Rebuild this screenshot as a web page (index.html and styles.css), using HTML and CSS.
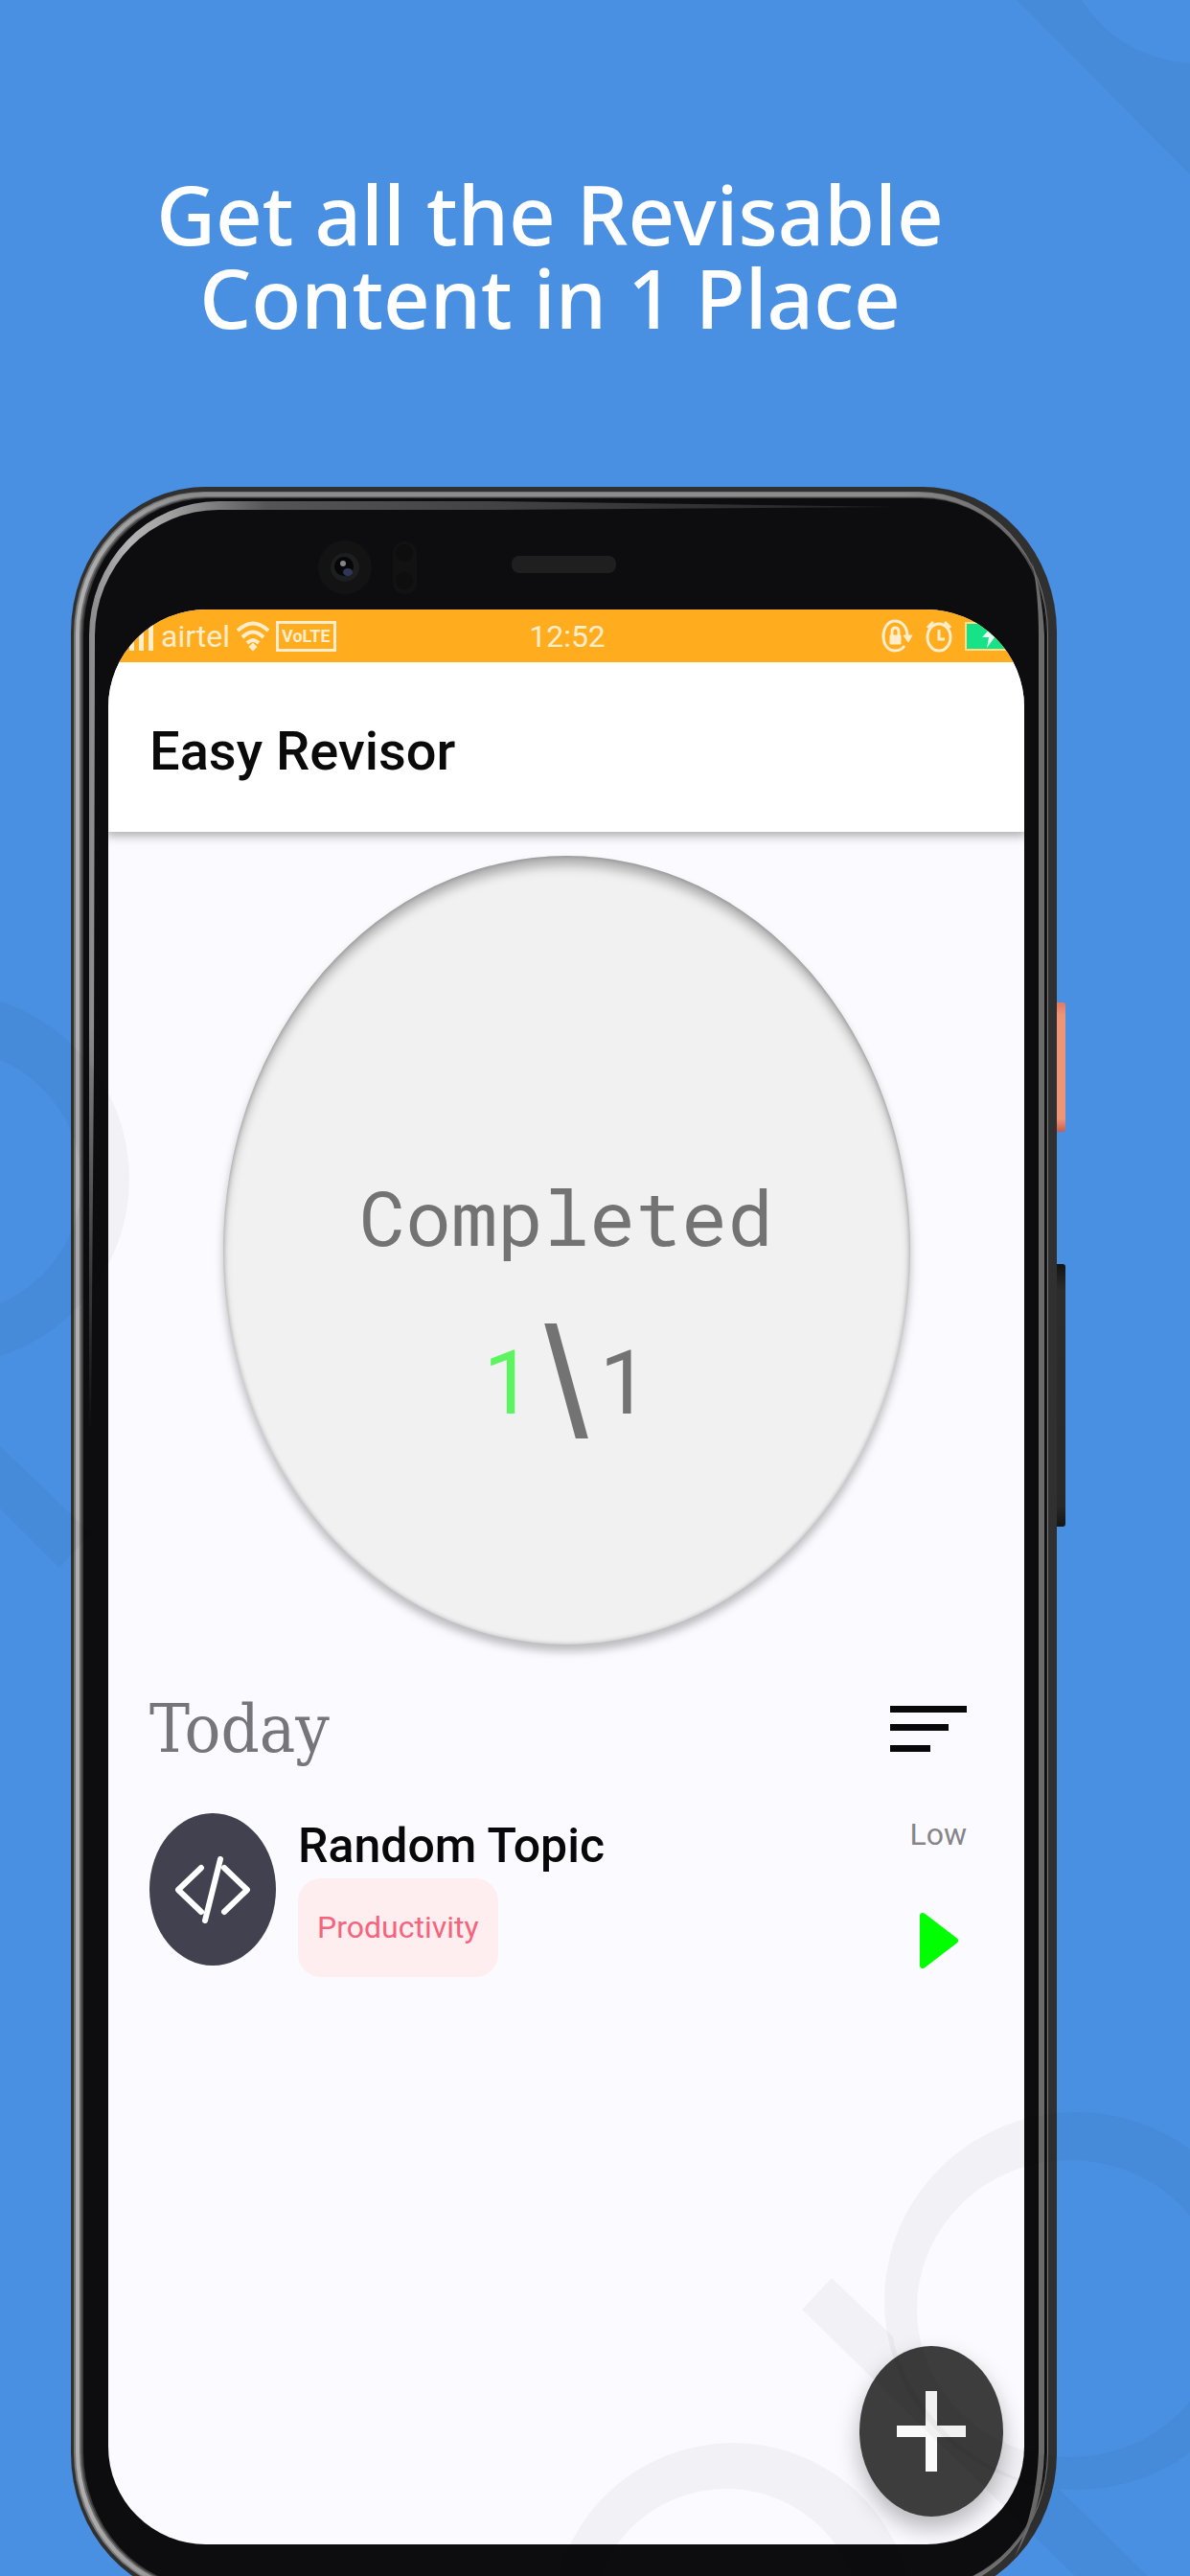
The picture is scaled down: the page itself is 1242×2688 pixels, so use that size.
FILE: index.html
```html
<!DOCTYPE html>
<html lang="en">
<head>
<meta charset="utf-8">
<meta name="viewport" content="width=device-width, initial-scale=1">
<title>Easy Revisor</title>
<link rel="stylesheet" href="styles.css">
</head>
<body>
<div class="page">
  <header class="promo">
    <h1 class="promo-title">Get all the Revisable<br>Content in 1 Place</h1>
  </header>

  <div class="phone">
    <svg class="bezel" viewBox="0 0 1029 2204" preserveAspectRatio="none" aria-hidden="true">
      <defs>
        <linearGradient id="rim" x1="0" x2="1" y1="0" y2="0">
          <stop offset="0" stop-color="#b0b0b0"/><stop offset=".12" stop-color="#8c8c8c"/>
          <stop offset=".85" stop-color="#8c8c8c"/><stop offset=".97" stop-color="#666"/><stop offset="1" stop-color="#1a1a1c"/>
        </linearGradient>
        <linearGradient id="gloss" x1="0" x2="1" y1="0" y2="0">
          <stop offset="0" stop-color="#8a8a8a"/><stop offset=".05" stop-color="#b4b4b4"/>
          <stop offset=".1" stop-color="#a0a0a0"/><stop offset=".22" stop-color="#555"/><stop offset="1" stop-color="#222"/>
        </linearGradient>
        <linearGradient id="gloss-fade" x1="0" x2="0" y1="0" y2="1">
          <stop offset="0" stop-color="#0d0d0f" stop-opacity="0"/><stop offset="1" stop-color="#0d0d0f"/>
        </linearGradient>
        <linearGradient id="power" x1="0" x2="0" y1="0" y2="1">
          <stop offset="0" stop-color="#e27a63"/><stop offset=".1" stop-color="#f09478"/>
          <stop offset=".9" stop-color="#f09478"/><stop offset="1" stop-color="#c75e50"/>
        </linearGradient>
        <linearGradient id="volume" x1="0" x2="0" y1="0" y2="1">
          <stop offset="0" stop-color="#141414"/><stop offset=".1" stop-color="#2c2c2c"/>
          <stop offset=".92" stop-color="#282828"/><stop offset="1" stop-color="#151515"/>
        </linearGradient>
      </defs>
      <rect x="1024" y="538" width="14" height="135" rx="3" fill="url(#power)"/>
      <rect x="1024" y="811" width="14" height="274" rx="3" fill="url(#volume)"/>
      <rect width="1029" height="2204" rx="140" ry="152" fill="#303030"/>
      <rect x="3" y="5" width="1017" height="2194" rx="136" ry="148" fill="#777"/>
      <rect x="5" y="6" width="1014" height="2192" rx="135" ry="147" fill="url(#rim)"/>
      <rect x="9" y="10" width="1009" height="2184" rx="132" ry="144" fill="#6a6a6a"/>
      <rect x="11" y="11" width="1007" height="2182" rx="131" ry="143" fill="#3c3c3c"/>
      <rect x="13" y="12" width="1005" height="2180" rx="130" ry="142" fill="#0d0d0f"/>
      <path d="M19 985V155A135 140 0 0 1 154 15L440 15L861 21L440 24H154A129 131 0 0 0 25 155L24 600L21 985Z" fill="url(#gloss)"/>
      <rect x="17" y="560" width="10" height="426" fill="url(#gloss-fade)"/>
      <path d="M1003 78Q1010 110 1010 155V2050Q1008 2110 985 2160Q1015 2110 1016 2050V155Q1014 110 1003 78Z" fill="#6b6b6b"/>
      <ellipse cx="286" cy="84" rx="28" ry="28" fill="#131314"/>
      <circle cx="286" cy="84" r="15" fill="#1d1e22"/>
      <circle cx="285" cy="83" r="10" fill="#07070a"/>
      <ellipse cx="289" cy="89" rx="5" ry="4" fill="#2f3757"/>
      <circle cx="284" cy="80" r="3" fill="#858585"/>
      <rect x="336" y="57" width="25" height="55" rx="12" fill="#121213"/>
      <circle cx="348" cy="69" r="9" fill="#0e0e0f"/><circle cx="348" cy="98" r="9" fill="#0e0e0f"/>
      <rect x="460" y="72" width="109" height="18" rx="8" fill="#1f1f20"/>
    </svg>

    <main class="screen">
      <div class="status">
        <div class="status-left">
          <svg width="26" height="30" viewBox="0 0 26 30" fill="#ffedcb" aria-hidden="true"><path d="M0 12h5v18H0zM10 4h5v26h-5zM20 0h5v30h-5z"/></svg>
          <span>airtel</span>
          <svg width="34" height="32" viewBox="0 0 34 32" fill="none" stroke="#ffedcb" stroke-width="4" aria-hidden="true"><path d="M1 10Q17-5 33 10M6 17Q17 6 28 17M11 23Q17 17 23 23"/><path d="M14 27L17 24L20 27L17 30Z" fill="#ffedcb" stroke-width="2"/></svg>
          <span class="volte">VoLTE</span>
        </div>
        <time class="clock">12:52</time>
        <div class="status-right">
          <svg width="33" height="36" viewBox="0 0 33 36" fill="none" stroke="#ffedcb" stroke-width="3" aria-hidden="true"><path d="M27 18C27 8 21 2 14 2S2 9 2 18s5 15 12 15c5 0 8-2 10-5"/><path d="M23 17h9l-4 7z" fill="#ffedcb" stroke-width="1"/><path d="M9 17h11v9H9z" fill="#ffedcb" stroke-width="1"/><path d="M11 17v-4q0-4 3.500-4t3.500 4v4"/></svg>
          <svg width="28" height="36" viewBox="0 0 28 36" fill="none" stroke="#ffedcb" stroke-width="3" aria-hidden="true"><ellipse cx="14" cy="19" rx="12" ry="14"/><path d="M14 11v10h6M2 9l6-6M26 9l-6-6" /></svg>
          <svg width="62" height="32" viewBox="0 0 62 32" aria-hidden="true"><path d="M1 2h60v28H1z" fill="#16e388" stroke="#ffe08a" stroke-width="2"/><path d="M30 4L18 17h7l-2 11 11-15h-7z" fill="#e8fff3"/></svg>
        </div>
      </div>

      <div class="appbar"><h2 class="app-name">Easy Revisor</h2></div>

      <section class="progress">
        <p class="progress-label">Completed</p>
        <p class="progress-count"><span class="done">1</span><span class="slash">\</span><span>1</span></p>
      </section>

      <section class="today">
        <div class="today-head">
          <h2 class="today-title">Today</h2>
          <button class="icon-button" type="button" aria-label="Sort">
            <svg width="80" height="50" viewBox="0 0 80 50" fill="#08080a" aria-hidden="true"><path d="M0 1h80v7H0zM0 20h61v7H0zM0 42h42v7H0z"/></svg>
          </button>
        </div>
        <article class="topic">
          <div class="avatar">
            <svg width="78" height="70" viewBox="0 0 78 70" fill="none" stroke="#fff" stroke-width="6" stroke-linecap="round" stroke-linejoin="round" aria-hidden="true"><path d="M27 12L3 35L27 58M51 12L75 35L51 58M47 3L31 67"/></svg>
          </div>
          <div class="topic-body">
            <h3 class="topic-title">Random Topic</h3>
            <span class="tag">Productivity</span>
          </div>
          <div class="topic-side">
            <span class="priority">Low</span>
            <button class="icon-button play" type="button" aria-label="Start">
              <svg width="42" height="58" viewBox="0 0 42 58" aria-hidden="true"><path d="M4 3L38 29L4 55Z" fill="#0f0" stroke="#0f0" stroke-width="6" stroke-linejoin="round"/></svg>
            </button>
          </div>
        </article>
      </section>

      <button class="fab" type="button" aria-label="Add topic">
        <svg width="72" height="84" viewBox="0 0 72 84" fill="#fafafa" aria-hidden="true"><path d="M30 0h12v36h30v12H42v36H30V48H0V36h30z"/></svg>
      </button>
    </main>
  </div>

  <svg class="watermark" viewBox="0 0 1242 2688" preserveAspectRatio="none" aria-hidden="true">
    <path d="M1061 0H1129Q1168 60 1242 66V182Z"/>
    <path fill-rule="evenodd" d="M-259 1230a197 195 0 1 0 394 0a197 195 0 1 0-394 0ZM-207 1233a146 140 0 1 1 292 0a146 140 0 1 1-292 0Z"/>
    <path d="M0 1509L95 1600L62 1636L0 1574Z"/>
    <path fill-rule="evenodd" d="M923 2401a200 197 0 1 0 400 0a200 197 0 1 0-400 0ZM957 2409a160 155 0 1 1 320 0a160 155 0 1 1-320 0Z"/>
    <path d="M868 2377L932 2438Q937 2470 960 2504Q1010 2580 1105 2597L1198 2688H1122L837 2410Z"/>
    <path fill-rule="evenodd" d="M576 2738a189 189 0 1 0 378 0a189 189 0 1 0-378 0ZM617 2738a141 141 0 1 1 282 0a141 141 0 1 1-282 0Z"/>
  </svg>
</div>
</body>
</html>
```
FILE: styles.css
```css
* { box-sizing: border-box; }

body {
  margin: 0;
  background: #4990e2;
  font-family: Roboto, "Liberation Sans", sans-serif;
}

h1, h2, h3, p { margin: 0; }

button {
  border: 0;
  padding: 0;
  background: none;
  cursor: pointer;
}

svg { display: block; flex: none; }

.page {
  position: relative;
  display: flex;
  flex-direction: column;
  min-height: 100vh;
  overflow: hidden;
}

/* Headline above the phone */
.promo {
  height: 508px;
  padding: 180px 94px 0 0;
  text-align: center;
}

.promo-title {
  color: #fff;
  font-family: "Noto Sans", sans-serif;
  font-size: 85px;
  font-weight: 500;
  line-height: 87px;
}

/* Phone body; its lower edge runs off the page */
.phone {
  position: relative;
  flex: 1;
  display: flex;
  margin: 0 139px -24px 74px;
  padding: 128px 34px 57px 39px;
}

.bezel {
  position: absolute;
  inset: 0;
  width: 100%;
  height: 100%;
  overflow: visible;
}

.screen {
  position: relative;
  flex: 1;
  overflow: hidden;
  border-radius: 102px;
  background: #fbfbff;
}

.status {
  position: relative;
  z-index: 1;
  display: grid;
  grid-template-columns: 1fr auto 1fr;
  align-items: center;
  height: 55px;
  padding-left: 22px;
  background: #ffac1f;
  color: #ffedcb;
  font-size: 32px;
}

.status-left { display: flex; align-items: center; gap: 7px; }

.clock { margin-right: 20px; }

.status-right {
  display: flex;
  align-items: center;
  justify-content: flex-end;
  gap: 13px;
}

.volte {
  padding: 0 3px;
  border: 3px solid #ffedcb;
  font-size: 18px;
  font-weight: 700;
  line-height: 26px;
}

.appbar {
  position: relative;
  display: flex;
  align-items: center;
  height: 177px;
  padding: 8px 43px 0;
  background: #fff;
  box-shadow: 0 2px 10px 2px rgba(0, 0, 0, .32);
}

.app-name { color: #0a0a0a; font-size: 56px; font-weight: 500; }

.progress {
  display: flex;
  flex-direction: column;
  align-items: center;
  width: 75%;
  aspect-ratio: 717 / 823;
  margin: 25px auto 0;
  padding-top: 316px;
  border-radius: 50%;
  background: #f1f1f1;
  color: #737373;
  box-shadow: inset 0 12px 12px -2px rgba(0, 0, 0, .28), inset 0 0 5px rgba(0, 0, 0, .25), 0 7px 10px rgba(0, 0, 0, .26);
}

.progress-label {
  font-family: "Roboto Mono", "DejaVu Sans Mono", monospace;
  font-size: 80px;
  line-height: 120px;
}

.progress-count {
  display: flex;
  align-items: center;
  gap: 12px;
  height: 120px;
  margin-top: 54px;
  font-size: 92px;
}

.done { color: #5cf560; }

.slash {
  font-family: "Liberation Sans", sans-serif;
  font-size: 164px;
  line-height: 120px;
}

.today { padding: 40px 60px 0 43px; }

.today-head {
  display: flex;
  align-items: center;
  justify-content: space-between;
  height: 96px;
}

.today-title {
  color: #76767a;
  font-family: "Roboto Slab", "DejaVu Serif Condensed", "DejaVu Serif", serif;
  font-size: 70px;
  font-weight: 400;
}

.topic {
  display: flex;
  align-items: flex-start;
  gap: 23px;
  margin-top: 40px;
}

.avatar {
  display: grid;
  place-items: center;
  width: 132px;
  height: 159px;
  border-radius: 50%;
  background: #41414f;
}

.topic-body { flex: 1; }

.topic-title {
  color: #08080a;
  font-size: 50px;
  font-weight: 500;
  line-height: 68px;
}

.tag {
  display: inline-block;
  padding: 0 20px;
  border-radius: 24px;
  background: #ffeef0;
  color: #f4647c;
  font-size: 32px;
  line-height: 103px;
}

.topic-side {
  display: flex;
  flex-direction: column;
  align-items: flex-end;
}

.priority { color: #85858a; font-size: 32px; line-height: 44px; }

.play { margin: 60px 8px 0 0; }

/* Floating add button over the list */
.fab {
  position: absolute;
  right: 22px;
  bottom: 29px;
  display: grid;
  place-items: center;
  width: 150px;
  height: 178px;
  border-radius: 50%;
  background: #3d3d3d;
  box-shadow: 0 12px 24px rgba(0, 0, 0, .28);
}

.watermark {
  position: absolute;
  inset: 0;
  width: 100%;
  height: 100%;
  fill: rgba(0, 0, 0, .035);
  pointer-events: none;
}
```
